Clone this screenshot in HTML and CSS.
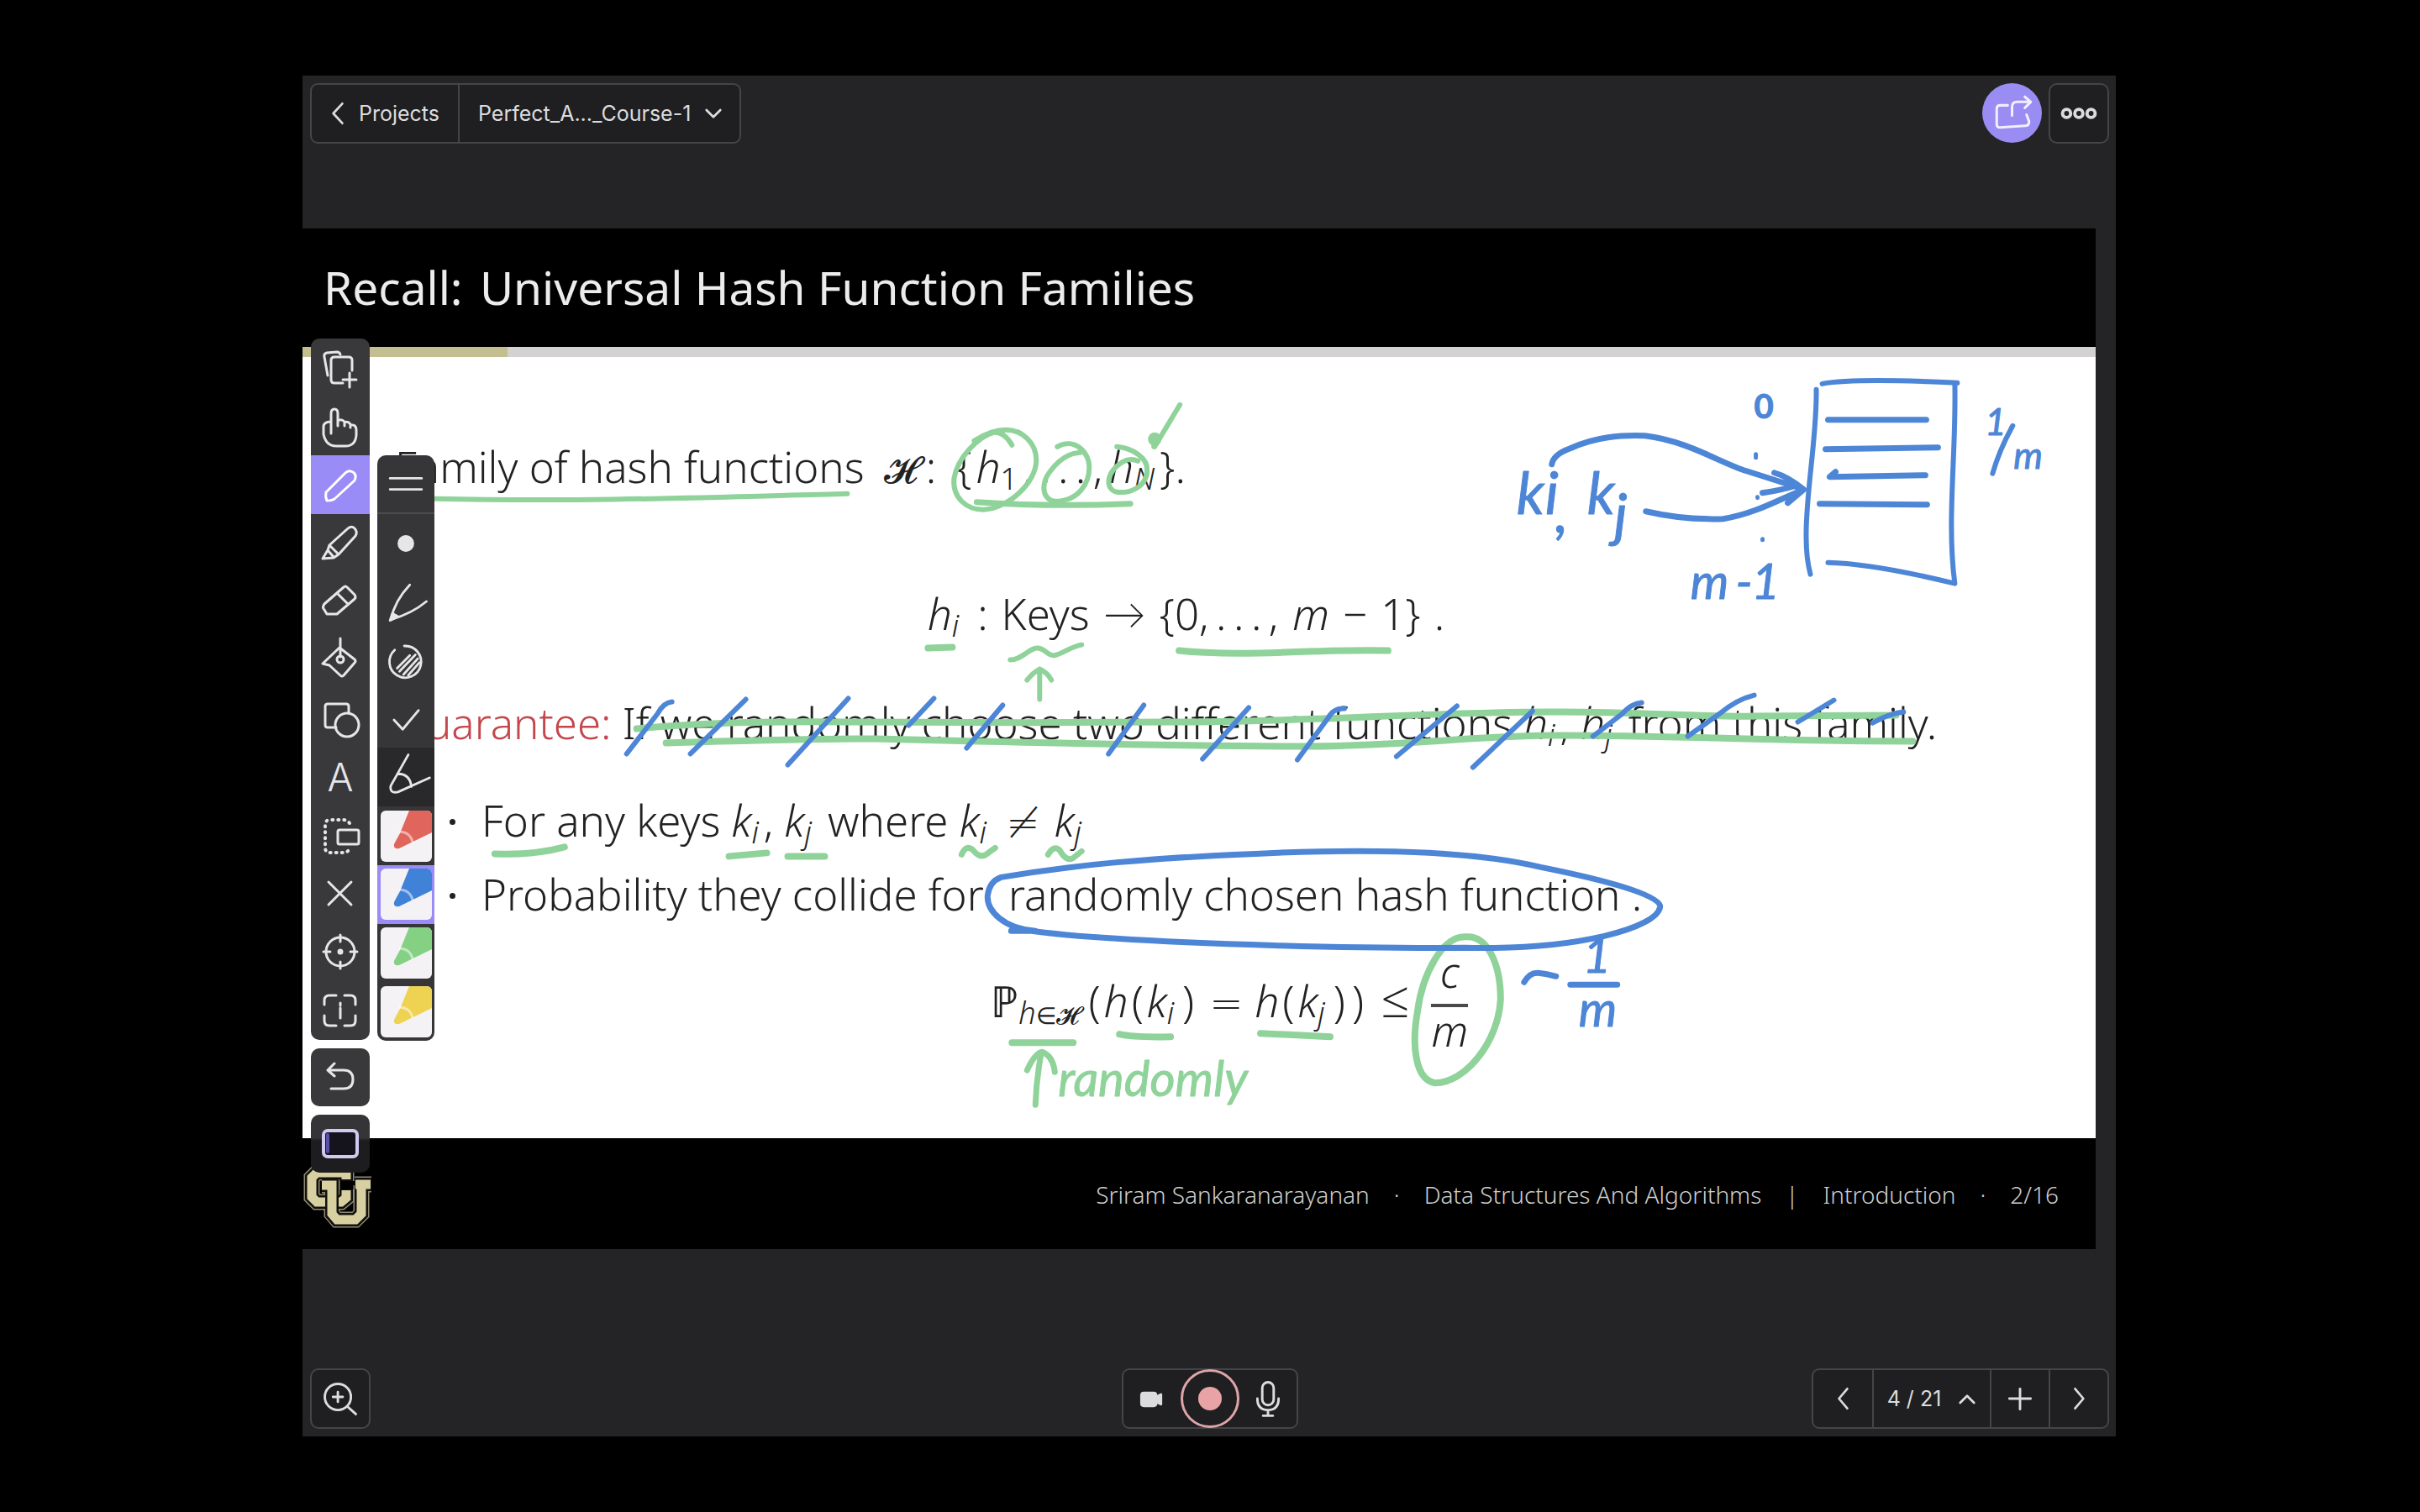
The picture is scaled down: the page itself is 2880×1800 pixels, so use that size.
FILE: index.html
```
<!DOCTYPE html>
<html lang="en">
<head>
<meta charset="utf-8">
<meta name="viewport" content="width=device-width, initial-scale=1">
<title>Perfect_A..._Course-1</title>
<link rel="stylesheet" href="styles.css">
</head>
<body>
<div class="app">
  <header class="bar">
    <nav class="group">
      <button class="cell cell-projects" type="button">
        <svg class="chev" viewBox="0 0 20 32"><path d="M16 3 4 16l12 13"/></svg>Projects
      </button>
      <button class="cell cell-file" type="button">
        Perfect_A..._Course-1<svg class="chev-down" viewBox="0 0 24 16"><path d="m3 3 9 9 9-9"/></svg>
      </button>
    </nav>
    <div class="actions">
      <button class="share" type="button" aria-label="Share">
        <svg viewBox="0 0 70 70"><path d="M30 26h-9q-4 0-4 4v18q0 4 4 4l29-2q5 0 5-5l-3-8"/><path d="M35 38V28q0-6 6-6h15M50 16l7 6-7 7"/></svg>
      </button>
      <button class="square" type="button" aria-label="More">
        <svg viewBox="0 0 70 70"><g class="thick"><circle cx="20" cy="35" r="5"/><circle cx="35" cy="35" r="5"/><circle cx="50" cy="35" r="5"/></g></svg>
      </button>
    </div>
  </header>

  <main class="stage">
    <article class="slide">
      <h1 class="slide-title"><span class="lead">Recall:</span> Universal Hash Function Families</h1>
      <div class="progress"><span class="progress-done"></span></div>
      <section class="slide-body">
        <p class="line line-family">Family of hash functions <span class="cal">𝓗</span><span class="colon">:</span><span>{&#8202;<i>h</i><sub>1</sub></span><span>.&#8201;.&#8201;.&#8201;.&#8201;</span><span class="tuck">,</span><span><i>h</i><sub><i>N</i></sub>}.</span></p>
        <p class="line line-map"><span><i>h</i><sub><i>i</i></sub></span><span>:</span><span>Keys</span><span class="arrow">→</span><span>{0,&#8201;.&#8201;.&#8201;.&#8201;,&#8201;&#8201;<i>m</i></span><span>−</span><span>1}</span><span>.</span></p>
        <p class="line line-guarantee"><span class="alert">Guarantee:</span> If we randomly choose two different functions <i>h</i><sub><i>i</i></sub>, <i>h</i><sub><i>j</i></sub> from this family.</p>
        <ul class="points">
          <li class="line">For any keys <i>k</i><sub><i>i</i></sub>, <i>k</i><sub><i>j</i></sub> where <i>k</i><sub><i>i</i></sub> <span class="op neq">≠</span> <i>k</i><sub><i>j</i></sub></li>
          <li class="line">Probability they collide for <span class="circled">randomly chosen hash function .</span></li>
        </ul>
        <div class="formula">
          <span class="formula-main">ℙ<sub><i>h</i><span class="in">∈</span><span class="cal-small">𝓗</span></sub><span class="paren">(</span><i>h</i><span class="paren">(</span><i>k</i><sub><i>i</i></sub><span class="paren">)</span><span class="rel op">=</span><i>h</i><span class="paren">(</span><i>k</i><sub><i>j</i></sub><span class="paren">)</span><span class="paren">)</span><span class="leq">≤</span></span>
          <span class="frac"><i class="num">c</i><i class="den">m</i></span>
        </div>
      </section>
      <footer class="slide-foot">
        <span>Sriram Sankaranarayanan</span><span>·</span><span>Data Structures And Algorithms</span><span>|</span><span>Introduction</span><span>·</span><span>2/16</span>
      </footer>

      <!-- CU logo, tucked under the tool column -->
      <svg class="logo" viewBox="0 0 86 80">
        <g class="logo-rim"><path d="M52 21V11H17l-6 6v23l6 6h29l6-5V31"/><path d="M23 26h12v34l6 7h22l7-7V26M62 25h20"/></g>
        <g class="logo-gap"><path d="M52 21V11H17l-6 6v23l6 6h29l6-5V31"/><path d="M23 26h12v34l6 7h22l7-7V26M62 25h20"/></g>
        <path class="logo-face" d="M52 19V11H17l-6 6v23l6 6h29l6-5V32"/>
        <path class="logo-gap" d="M28 26h7v34l6 7h22l7-7V30"/>
        <path class="logo-face" d="M23 26h12v34l6 7h22l7-7V26M63 25h18"/>
      </svg>

      <svg class="ink" viewBox="360 272 2134 1216" preserveAspectRatio="xMinYMin meet">
        <g class="green">
          <path class="w6" d="M518 594C700 598 850 592 1009 588"/>
          <path class="w6" d="M1205 530Q1196 514 1183 515C1165 520 1140 545 1136 570C1134 592 1150 607 1171 607C1200 606 1234 575 1234 548C1234 528 1218 512 1198 512Q1180 512 1160 525"/>
          <path class="w7" d="M1163 598Q1250 604 1346 600"/>
          <path class="w6" d="M1259 532C1280 520 1298 540 1297 557C1297 575 1285 597 1256 597C1240 595 1240 575 1250 562Q1266 540 1286 539"/>
          <path class="w6" d="M1330 532C1350 534 1367 546 1366 560C1366 580 1345 588 1330 586C1316 583 1316 563 1337 550Q1346 545 1355 549"/>
          <path class="w6" d="M1405 482 1375 532M1374 520v12"/>
          <circle class="dab" cx="1375" cy="523" r="8"/>
          <path class="w8" d="M1105 772 1134 771"/>
          <path class="w6" d="M1203 786C1217 786 1226 771 1236 772S1248 783 1258 780 1276 770 1288 768"/>
          <path class="w6" d="M1238 833V797M1223 810Q1230 801 1238 797 1247 801 1252 810"/>
          <path class="w8" d="M1404 775Q1450 780 1530 777T1653 775"/>
          <path class="w8" d="M758 868C840 860 940 859 1010 860S1300 861 1400 860C1560 860 1700 848 1846 848C1940 847 2040 855 2089 853L2258 852"/>
          <path class="w8" d="M793 885C900 882 960 880 1042 880C1200 884 1400 889 1559 889C1680 888 1750 877 1846 876C1980 875 2100 883 2278 883"/>
          <path class="w8" d="M589 1017Q635 1019 672 1009M868 1020 913 1016M938 1020H982"/>
          <path class="w7" d="M1145 1018Q1150 1006 1158 1012 1167 1023 1174 1018L1185 1010M1248 1018Q1255 1006 1262 1013 1270 1027 1278 1022L1288 1014"/>
          <path class="w8" d="M1746 1116C1772 1114 1787 1150 1787 1190C1785 1240 1745 1291 1708 1290C1685 1285 1681 1245 1688 1205C1694 1160 1718 1114 1746 1116z"/>
          <path class="w8" d="M1205 1242H1278M1333 1232Q1350 1236 1394 1235M1501 1231 1584 1235"/>
          <path class="w7" d="M1233 1316Q1234 1285 1240 1254M1223 1275Q1232 1255 1241 1253 1254 1258 1256 1277"/>
          <text class="note" x="1260" y="1306">randomly</text>
        </g>
        <g class="blue">
          <path class="w6" d="M800 836Q790 837 783 850L746 898M888 833 822 898M1010 832 938 911M1112 832 1082 864M1194 840 1151 891M1362 840 1320 898M1487 843 1432 904M1601 844Q1588 843 1581 856L1545 905M1735 841 1663 901M1825 847 1754 914M1955 837Q1943 838 1932 850L1897 877M2089 828Q2068 833 2048 850L2010 877M2184 834 2141 860M2267 848Q2250 850 2230 861"/>
          <path class="w7" d="M1204 1109H1233C1195 1106 1175 1085 1176 1067Q1178 1050 1192 1045C1280 1030 1370 1022 1495 1017C1640 1010 1760 1015 1835 1033C1910 1048 1978 1066 1977 1080C1974 1105 1880 1132 1744 1129C1600 1130 1420 1124 1329 1118Q1260 1114 1215 1107"/>
          <path class="w7" d="M1815 1170Q1822 1158 1832 1159T1853 1163M1870 1173H1926"/>
          <text class="note" x="1885" y="1159">1</text>
          <text class="note" x="1880" y="1223">m</text>
          <path class="w6" d="M2163 464C2164 520 2150 590 2151 640Q2151 665 2156 684M2170 457Q2210 450 2331 456M2328 456C2330 540 2318 620 2328 695M2177 670Q2230 671 2328 695"/>
          <path class="w7" d="M2177 500 2294 500M2174 535 2308 533M2186 562 2179 568 2293 566M2167 600 2295 601"/>
          <path class="w7" d="M1848 553Q1850 541 1870 534C1900 520 1930 518 1959 519C2010 525 2050 552 2080 561L2146 582M1960 609C1990 616 2020 619 2052 618C2090 612 2120 594 2146 584M2113 563Q2130 568 2148 583L2129 599M2099 587Q2120 584 2137 579"/>
          <text class="note-tall" x="1806 1840" y="612">ki</text>
          <text class="note-tall" x="1852" y="634">,</text>
          <text class="note-tall" x="1890 1922" y="612 638">kj</text>
          <text class="note-digit" x="2089" y="498">0</text>
          <text class="note" x="2013 2067 2086" y="713">m-1</text>
          <text class="note-small" x="2364" y="518">1</text>
          <path class="w6" d="M2397 507Q2381 536 2373 564"/>
          <text class="note-small" x="2398" y="558">m</text>
          <path class="w5" d="M2091 541v4M2093 592v1M2099 642v1"/>
        </g>
      </svg>
    </article>
  </main>

  <footer class="bar">
    <button class="square" type="button" aria-label="Zoom in">
      <svg viewBox="0 0 70 70"><circle cx="32" cy="33" r="16"/><path d="m44 45 10 9M32 27v12M26 33h12"/></svg>
    </button>
    <div class="group group-record">
      <button class="cell cell-cam" type="button" aria-label="Camera"><svg viewBox="0 0 70 70"><path class="solid" d="M25 28h12q3 0 3 3v2l6-3v12l-6-3v2q0 3-3 3H25q-3 0-3-3V31q0-3 3-3z"/></svg></button>
      <button class="record" type="button" aria-label="Record"><span class="record-dot"></span></button>
      <button class="cell cell-cam" type="button" aria-label="Microphone"><svg viewBox="0 0 70 70"><rect x="28" y="15" width="14" height="28" rx="7"/><path d="M22 35q0 14 13 14t13-14M35 49v6M29 56h12"/></svg></button>
    </div>
    <nav class="group">
      <button class="cell cell-nav" type="button" aria-label="Previous page"><svg class="chev" viewBox="0 0 20 32"><path d="M16 3 5 16l11 13"/></svg></button>
      <button class="cell cell-page" type="button"><span>4 / 21</span><svg class="chev-down" viewBox="0 0 24 16"><path d="m3 13 9-9 9 9"/></svg></button>
      <button class="cell cell-nav" type="button" aria-label="Add page"><svg viewBox="0 0 70 70"><path d="M35 23v25M22 35h26"/></svg></button>
      <button class="cell cell-nav" type="button" aria-label="Next page"><svg class="chev" viewBox="0 0 20 32"><path d="m5 3 11 13L5 29"/></svg></button>
    </nav>
  </footer>

  <aside class="tools">
    <div class="column">
      <div class="palette palette-main">
        <button class="tool" type="button" aria-label="Add page"><svg viewBox="0 0 70 70"><path d="M49 38V26q0-4-4-4H28q-4 0-4 4v23q0 4 4 4h10"/><path d="M20 44 16 22q-1-4 3-5l12-1q3 0 4 3M46 41v17M38 49h16"/></svg></button>
        <button class="tool" type="button" aria-label="Hand"><svg viewBox="0 0 70 70"><path d="M24 43V19q0-5 4-5t4 5v15-6q4-3 8 1v5-4q4-2 7 2v4-3q7-1 7 6v6q-1 13-13 13H30q-12 0-15-14V35q0-6 9-6"/></svg></button>
        <button class="tool is-active" type="button" aria-label="Pen"><svg viewBox="0 0 70 70"><path d="m18 44 23-23q4-4 9-1t2 10L28 52q-3 2-9 2-2-4-1-10z"/></svg></button>
        <button class="tool" type="button" aria-label="Highlighter"><svg viewBox="0 0 70 70"><path d="m22 37 21-19q5-5 9-1t1 9L33 48zM22 37l-2 6-6 10 13-1 6-4M20 43l7 8"/></svg></button>
        <button class="tool" type="button" aria-label="Eraser"><svg viewBox="0 0 70 70"><path d="m39 18-23 20q-3 4 0 7l3 5h12l21-18q2-2 0-5l-9-9q-2-2-4 0zM31 25l13 13"/></svg></button>
        <button class="tool" type="button" aria-label="Fill"><svg viewBox="0 0 70 70"><path d="m34 20 18 14q2 2 0 4L39 53q-2 2-4 0L22 41l-8-2zM35 9v22"/><circle cx="35" cy="34" r="4"/></svg></button>
        <button class="tool" type="button" aria-label="Shapes"><svg viewBox="0 0 70 70"><path d="M30 45H20q-3 0-3-3V20q0-3 3-3h22q3 0 3 3v8"/><circle cx="43" cy="42" r="14"/></svg></button>
        <button class="tool tool-text" type="button">A</button>
        <button class="tool" type="button" aria-label="Lasso"><svg viewBox="0 0 70 70"><path class="dotted" d="M46 20q-3-4-7-4H23q-6 0-6 6v27q0 6 6 6h16q4 0 7-4"/><rect x="32" y="28" width="25" height="17" rx="2"/></svg></button>
        <button class="tool" type="button" aria-label="Delete"><svg viewBox="0 0 70 70"><path d="m21 21 27 27M48 21 21 48"/></svg></button>
        <button class="tool" type="button" aria-label="Pointer"><svg viewBox="0 0 70 70"><circle cx="35" cy="34" r="17"/><path d="M35 14v8M35 46v8M15 34h8M47 34h8"/><circle class="solid" cx="35" cy="34" r="2"/></svg></button>
        <button class="tool" type="button" aria-label="Capture"><svg viewBox="0 0 70 70"><path d="M16 28v-5q0-6 6-6h8M40 17h7q6 0 6 6v5M53 41v6q0 6-6 6h-7M30 53h-8q-6 0-6-6v-6M35 26v3M35 32v12"/></svg></button>
      </div>
      <button class="tool tool-single" type="button" aria-label="Undo"><svg viewBox="0 0 70 70"><path d="m28 18-8 8 8 7M20 26h19q11 0 11 11t-11 11H24"/></svg></button>
      <button class="tool tool-single tool-screen" type="button" aria-label="Presentation"><svg viewBox="0 0 70 70"><rect class="screen" x="15" y="19" width="40" height="31" rx="5"/><path class="screen-side" d="M20 24v20"/></svg></button>
    </div>
    <div class="palette palette-pens">
      <button class="tool tool-handle" type="button" aria-label="Move"><svg viewBox="0 0 70 70"><path d="M15 28h40M15 42h40"/></svg></button>
      <button class="tool" type="button" aria-label="Size"><svg viewBox="0 0 70 70"><circle class="solid" cx="35" cy="35" r="9"/></svg></button>
      <button class="tool" type="button" aria-label="Taper"><svg viewBox="0 0 70 70"><path d="M40 14Q21 34 16 58 43 50 61 35"/><path class="solid" d="m18 50 7 4-10 5z"/></svg></button>
      <button class="tool" type="button" aria-label="Opacity"><svg viewBox="0 0 70 70"><path d="M33 17a20 20 0 1 1-12 5M47 28 27 49M50 33 32 53M52 38 38 54M40 29 24 45"/></svg></button>
      <button class="tool" type="button" aria-label="Confirm"><svg viewBox="0 0 70 70"><path d="m20 36 11 12 20-24"/></svg></button>
      <button class="tool tool-brush" type="button" aria-label="Brush"><svg viewBox="0 0 70 70"><path d="M38 7 16 46q-2 10 9 8l40-18M25 31q15 0 17 16"/></svg></button>
      <button class="tool swatch red" type="button" aria-label="Red"><svg viewBox="0 0 61 61"><path class="crayon" d="M34 0h27v26L22 45q-7 1-6-5 3-6 7-13z"/><path class="collar" d="M23 25q12 1 15 12"/></svg></button>
      <button class="tool swatch blue-pen is-chosen" type="button" aria-label="Blue"><svg viewBox="0 0 61 61"><path class="crayon" d="M34 0h27v26L22 45q-7 1-6-5 3-6 7-13z"/><path class="collar" d="M23 25q12 1 15 12"/></svg></button>
      <button class="tool swatch green-pen" type="button" aria-label="Green"><svg viewBox="0 0 61 61"><path class="crayon" d="M34 0h27v26L22 45q-7 1-6-5 3-6 7-13z"/><path class="collar" d="M23 25q12 1 15 12"/></svg></button>
      <button class="tool swatch yellow" type="button" aria-label="Yellow"><svg viewBox="0 0 61 61"><path class="crayon" d="M34 0h27v26L22 45q-7 1-6-5 3-6 7-13z"/><path class="collar" d="M23 25q12 1 15 12"/></svg></button>
    </div>
  </aside>
</div>
</body>
</html>
```
FILE: styles.css
```
* { box-sizing: border-box; }

body {
  margin: 0;
  min-height: 100vh;
  padding: 5vh 0;
  background: #000;
  color: #dcdcde;
  font-family: Inter, "Liberation Sans", sans-serif;
}

button {
  margin: 0;
  padding: 0;
  border: 0;
  background: none;
  color: inherit;
  font: inherit;
  cursor: pointer;
}

svg {
  display: block;
  fill: none;
  stroke: currentColor;
  stroke-width: 3px;
  stroke-linecap: round;
  stroke-linejoin: round;
}

.solid { fill: currentColor; }
.thick { stroke-width: 4px; }

.app {
  position: relative;
  display: flex;
  flex-direction: column;
  width: calc(75% - 2px);
  min-height: 90vh;
  margin-left: 12.5%;
  background: #242426;
}

/* Top and bottom bars */
.bar {
  display: flex;
  justify-content: space-between;
  align-items: center;
  padding: 9px 8px 9px 9px;
}

.group {
  display: flex;
  height: 72px;
  border: 2px solid #454547;
  border-radius: 9px;
  background: #1f1f21;
}

.cell {
  display: flex;
  align-items: center;
  justify-content: center;
  font-size: 25px;
}

.cell + .cell { border-left: 2px solid #454547; }
.cell-projects { gap: 16px; padding: 0 22px; }
.cell-file { gap: 16px; padding: 0 20px 0 22px; }
.cell-nav { width: 70px; }
.cell-page { gap: 20px; width: 140px; }
.chev { width: 18px; height: 30px; }
.chev-down { width: 22px; height: 15px; }

.actions { display: flex; gap: 8px; }

.share {
  width: 71px;
  height: 71px;
  border-radius: 50%;
  background: #998cf2;
  color: #f0eeff;
}

.square {
  width: 72px;
  height: 72px;
  border: 2px solid #454547;
  border-radius: 10px;
  background: #1f1f21;
}

/* The start margin makes up for the wider group at the far end */
.group-record {
  align-items: center;
  width: 210px;
  margin-left: 282px;
}

.group-record .cell { flex: 1; border: 0; }
.group-record .cell svg { width: 68px; flex: none; }

.record {
  display: grid;
  place-items: center;
  flex: none;
  width: 70px;
  height: 70px;
  border: 3px solid #dfa5a8;
  border-radius: 50%;
}

.record-dot {
  width: 28px;
  height: 28px;
  border-radius: 50%;
  background: #e8a3a7;
}

/* Slide */
.stage { flex: 1; padding: 92px 24px 0 0; }

.slide {
  position: relative;
  background: #fff;
  color: #222;
  font-family: "Noto Sans", "Open Sans", sans-serif;
  font-weight: 300;
}

.slide-title {
  margin: 0;
  padding: 32px 25px 33px;
  background: #000;
  color: #ececec;
  font-size: 55px;
  font-weight: 400;
  line-height: 76px;
}

.lead { margin-right: 6px; }

.progress { height: 12px; background: #d3d1d2; }
.progress-done { display: block; width: 244px; height: 100%; background: #c4bf90; }

.slide-body { padding: 95px 141px 102px 110px; font-size: 51px; }

.line {
  margin: 0;
  line-height: 70px;
  white-space: nowrap;
}

sub {
  margin-right: 6px;
  font-size: 36px;
  line-height: 0;
  vertical-align: -8px;
}

.cal { margin: 0 10px; font-size: 44px; line-height: 0; }
.cal-small { margin-right: 2px; font-size: 30px; line-height: 0; }
.in { font-size: 28px; }
.colon { margin-right: 24px; }
.tuck { margin-right: 8px; }
.op { font-family: "DejaVu Sans", sans-serif; font-size: 48px; font-weight: 200; line-height: 0; }
.neq { margin: 0 4px; }
.paren { margin: 0 4px; }

.line-map {
  display: flex;
  justify-content: center;
  gap: 16px;
  margin-top: 105px;
}

.arrow { font-family: Lato, "Noto Sans", sans-serif; }

.line-guarantee { margin-top: 60px; }
.alert { color: #c4474c; }

.points {
  display: grid;
  gap: 18px;
  margin: 46px 0 18px;
  padding: 0 0 0 103px;
  list-style: none;
}

.points .line::before {
  content: "";
  float: left;
  width: 7px;
  height: 7px;
  margin: 34px 0 0 -38px;
  border-radius: 50%;
  background: #222;
}

.circled { margin-left: 16px; }

.formula {
  display: flex;
  justify-content: center;
  align-items: flex-start;
  gap: 26px;
  padding-left: 103px;
}

.formula-main { padding-top: 39px; line-height: 70px; white-space: nowrap; }
.rel { margin: 0 14px; }
.leq { margin-left: 16px; font-size: 60px; line-height: 0; }

.frac { display: flex; flex-direction: column; text-align: center; }
.num { line-height: 78px; }
.den { border-top: 4px solid #4a4a4a; line-height: 54px; }

.slide-foot {
  display: flex;
  justify-content: flex-end;
  gap: 29px;
  padding: 47px 44px 45px;
  background: #000;
  color: #cfcfcf;
  font-size: 28px;
  line-height: 40px;
}

.logo {
  position: absolute;
  left: 0;
  bottom: 22px;
  width: 86px;
  height: 80px;
  stroke-linecap: butt;
  stroke-linejoin: miter;
}

.logo-rim { stroke: #8d8a70; stroke-width: 19px; }
.logo-gap { stroke: #111; stroke-width: 16px; }
.logo-face { stroke: #d8d0a0; stroke-width: 11px; }

/* Pen strokes over the slide */
.ink { position: absolute; inset: 0; width: 100%; height: 100%; pointer-events: none; }
.ink text { fill: currentColor; stroke-width: 1px; font-family: Lato, sans-serif; font-style: italic; font-weight: 400; }
.ink .note { font-size: 58px; }
.ink .note-small { font-size: 44px; }
.ink .note-tall { font-size: 70px; }
.ink .note-digit { font-size: 40px; font-weight: 700; font-style: normal; }
.green { color: #8fd39a; }
.blue { color: #4d86d6; }
.dab { fill: currentColor; stroke: none; }
.w5 { stroke-width: 5px; }
.w6 { stroke-width: 6px; }
.w7 { stroke-width: 7px; }
.w8 { stroke-width: 8px; }

/* Floating tool palettes */
.tools {
  position: absolute;
  left: 10px;
  top: 313px;
  display: flex;
  align-items: flex-start;
  gap: 9px;
}

.column { display: flex; flex-direction: column; gap: 10px; }

.palette {
  display: grid;
  grid-auto-rows: 1fr;
  width: 70px;
  border-radius: 10px;
  background: #39393b;
  overflow: hidden;
}

.palette-main { height: 835px; }
.palette-pens { width: 68px; height: 697px; margin-top: 139px; background: #363638; }

.tool { display: grid; place-items: center; color: #e6e6e8; min-height: 0; }
.tool svg { width: 70px; height: 70px; }
.palette-pens .tool svg { width: 66px; height: 66px; }
.is-active { background: #998cf7; color: #fff; }
.tool-text { font-size: 46px; font-weight: 300; line-height: 1; }
.dotted { stroke-dasharray: 1 6; stroke-width: 4px; }

.tool-single {
  width: 70px;
  height: 69px;
  border-radius: 10px;
  background: #39393b;
}

.tool-screen { background: linear-gradient(#353537 40%, #1d1d20 45%); }
.screen { fill: #15131c; stroke: #cfcaf0; stroke-width: 4px; }
.screen-side { stroke: #5a50a8; stroke-width: 4px; }

.tool-handle { border-bottom: 2px solid #4c4c4e; }
.tool-brush { background: #29292b; }

.palette-pens .swatch svg {
  width: 61px;
  height: 61px;
  border-radius: 6px;
  background: #f4f2f4;
}

.palette-pens .is-chosen { background: #998cf7; }
.crayon { fill: currentColor; stroke: none; }
.collar { stroke: #fff; stroke-opacity: .5; }
.red { color: #e0655c; }
.blue-pen { color: #3f82d8; }
.green-pen { color: #84d184; }
.yellow { color: #eed252; }
```
